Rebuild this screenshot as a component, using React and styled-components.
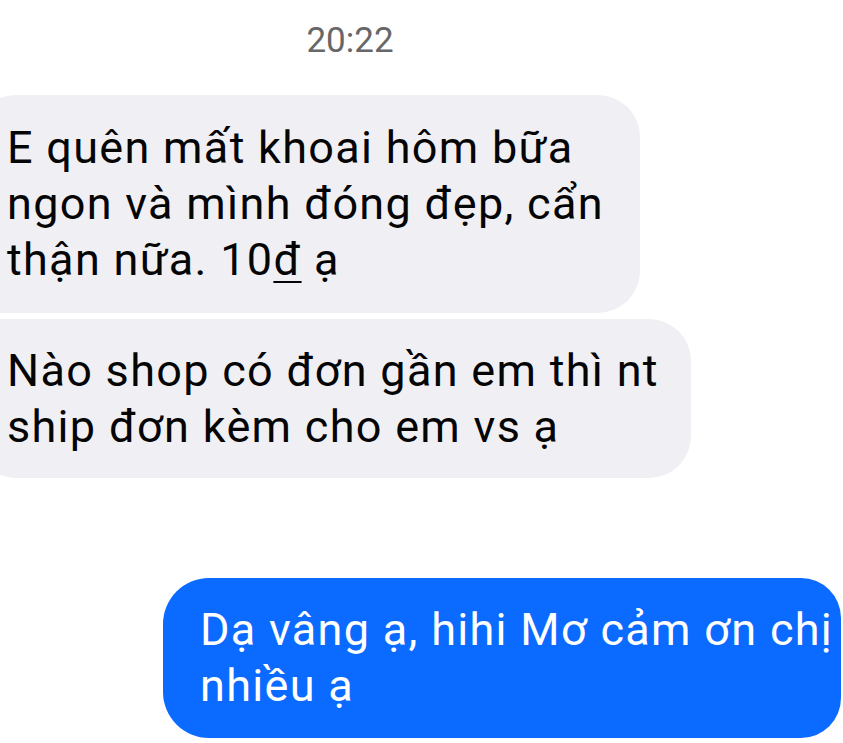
import React from "react"
import styled, { createGlobalStyle } from "styled-components"

const GlobalStyle = createGlobalStyle`
  html, body {
    margin: 0;
    padding: 0;
    background: #ffffff;
    overflow: hidden;
  }
  body {
    font-family: Roboto, "Noto Sans", "Liberation Sans", sans-serif;
  }
`

const Thread = styled.div`
  width: 843px;
  height: 743px;
  overflow: hidden;
  display: flex;
  flex-direction: column;
  padding-top: 20px;
  box-sizing: border-box;
`

const Timestamp = styled.div`
  width: 700px;
  text-align: center;
  font-size: 35px;
  line-height: 42px;
  color: #676767;
  margin-bottom: 33px;
`

const Group = styled.div`
  display: flex;
  flex-direction: column;
  align-items: ${(p) => (p.$mine ? "flex-end" : "flex-start")};
  gap: 6px;
`

const Bubble = styled.div`
  box-sizing: border-box;
  font-size: 45px;
  line-height: 56px;
  letter-spacing: 1.3px;
  white-space: nowrap;
  color: ${(p) => (p.$mine ? "#ffffff" : "#050505")};
  background: ${(p) => (p.$mine ? "#0b6aff" : "#f0f0f4")};
  padding: ${(p) => p.$pad};
  border-radius: ${(p) => p.$radius};
  margin-left: ${(p) => p.$offset || "0"};
  width: ${(p) => p.$width || "auto"};
`

const Spacer = styled.div`
  height: 100px;
`

const Line = styled.div``

const Underlined = styled.span`
  text-decoration: underline;
  text-underline-offset: 6px;
  text-decoration-thickness: 2px;
`

export default function App() {
  return (
    <>
      <GlobalStyle />
      <Thread>
        <Timestamp>20:22</Timestamp>
        <Group>
          <Bubble $offset="-24px" $pad="25px 36px 25px 31px" $radius="40px 42px 42px 8px">
            <Line>E quên mất khoai hôm bữa</Line>
            <Line>ngon và mình đóng đẹp, cẩn</Line>
            <Line>
              thận nữa. 10<Underlined>đ</Underlined> ạ
            </Line>
          </Bubble>
          <Bubble $offset="-24px" $pad="24px 32px 23px 31px" $radius="8px 42px 42px 40px">
            <Line>Nào shop có đơn gần em thì nt</Line>
            <Line>ship đơn kèm cho em vs ạ</Line>
          </Bubble>
        </Group>
        <Spacer />
        <Group>
          <Bubble $mine $offset="163px" $width="678px" $pad="24px 0 24px 37px" $radius="46px 40px 40px 46px">
            <Line>Dạ vâng ạ, hihi Mơ cảm ơn chị</Line>
            <Line>nhiều ạ</Line>
          </Bubble>
        </Group>
      </Thread>
    </>
  )
}
